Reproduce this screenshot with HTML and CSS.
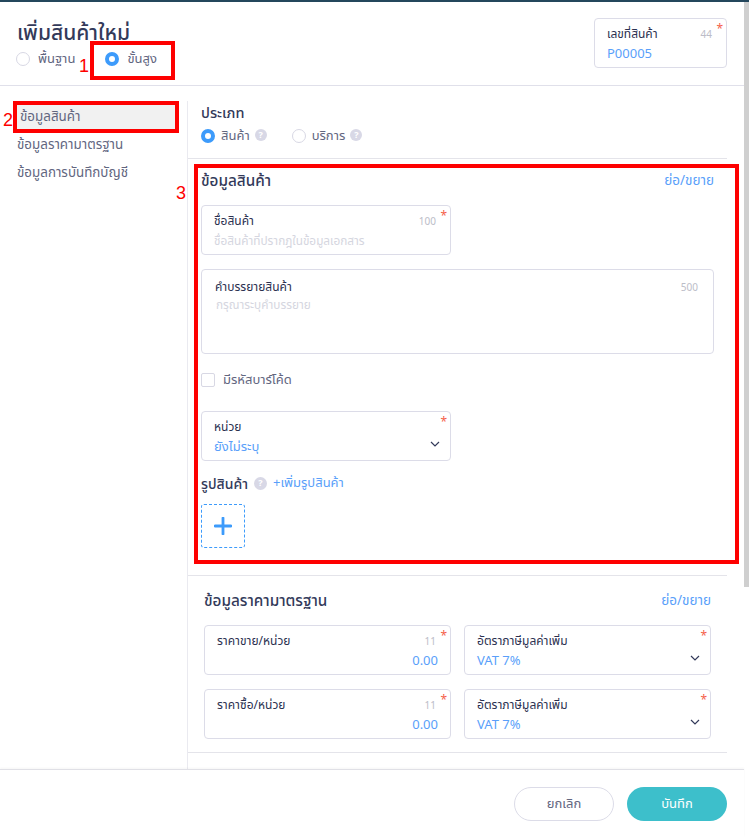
FILE: index.html
```html
<!DOCTYPE html>
<html lang="th">
<head>
    <link rel="stylesheet" href="styles.css">
    <meta charset="UTF-8">
    <title>เพิ่มสินค้าใหม่</title>
</head>
<body>
    <div class="top-bar"></div>
    <div class="window">
        <div class="modal">
            <header class="modal-header">
                <div>
                    <h1>เพิ่มสินค้าใหม่</h1>
                    <div class="mode-row">
                        <span class="radio"></span><span class="radio-text">พื้นฐาน</span>
                        <span class="radio checked mode-second"></span><span class="radio-text">ขั้นสูง</span>
                    </div>
                </div>
                <div class="field code-field">
                    <span class="star">*</span>
                    <div class="field-head"><label>เลขที่สินค้า</label><span class="count">44</span></div>
                    <div class="value code-value">P00005</div>
                </div>
            </header>

            <div class="modal-body">
                <aside class="side-menu">
                    <a class="active">ข้อมูลสินค้า</a>
                    <a>ข้อมูลราคามาตรฐาน</a>
                    <a>ข้อมูลการบันทึกบัญชี</a>
                </aside>

                <main class="content">
                    <section class="type-section">
                        <h3>ประเภท</h3>
                        <div class="type-row">
                            <span class="radio checked"></span><span class="radio-text">สินค้า</span><span class="help">?</span>
                            <span class="radio type-second"></span><span class="radio-text">บริการ</span><span class="help">?</span>
                        </div>
                    </section>

                    <section class="product-section">
                        <div class="section-title"><h2>ข้อมูลสินค้า</h2><a>ย่อ/ขยาย</a></div>
                        <div class="field name-field">
                            <span class="star">*</span>
                            <div class="field-head"><label>ชื่อสินค้า</label><span class="count">100</span></div>
                            <div class="value placeholder">ชื่อสินค้าที่ปรากฎในข้อมูลเอกสาร</div>
                        </div>
                        <div class="field desc-field">
                            <div class="field-head"><label>คำบรรยายสินค้า</label><span class="count">500</span></div>
                            <div class="value placeholder">กรุณาระบุคำบรรยาย</div>
                        </div>
                        <div class="check-row"><span class="checkbox"></span><span class="radio-text">มีรหัสบาร์โค้ด</span></div>
                        <div class="field name-field select-field">
                            <span class="star">*</span>
                            <div class="field-head"><label>หน่วย</label></div>
                            <div class="value">ยังไม่ระบุ</div>
                            <svg class="chevron" width="10" height="6" viewBox="0 0 10 6"><path d="M1 1l4 4 4-4" fill="none" stroke="#333a5a" stroke-width="1.2"/></svg>
                        </div>
                        <div class="picture-row">
                            <h3>รูปสินค้า</h3><span class="help">?</span><a>+เพิ่มรูปสินค้า</a>
                        </div>
                        <div class="add-box">
                            <svg width="18" height="18" viewBox="0 0 18 18"><path d="M9 1v16M1 9h16" stroke="#3d9bfb" stroke-width="2.8" stroke-linecap="round"/></svg>
                        </div>
                    </section>

                    <section class="price-section">
                        <div class="section-title"><h2>ข้อมูลราคามาตรฐาน</h2><a>ย่อ/ขยาย</a></div>
                        <div class="price-grid">
                            <div class="field">
                                <span class="star">*</span>
                                <div class="field-head"><label>ราคาขาย/หน่วย</label><span class="count">11</span></div>
                                <div class="value amount">0.00</div>
                            </div>
                            <div class="field select-field">
                                <span class="star">*</span>
                                <div class="field-head"><label>อัตราภาษีมูลค่าเพิ่ม</label></div>
                                <div class="value">VAT 7%</div>
                                <svg class="chevron" width="10" height="6" viewBox="0 0 10 6"><path d="M1 1l4 4 4-4" fill="none" stroke="#333a5a" stroke-width="1.2"/></svg>
                            </div>
                            <div class="field">
                                <span class="star">*</span>
                                <div class="field-head"><label>ราคาซื้อ/หน่วย</label><span class="count">11</span></div>
                                <div class="value amount">0.00</div>
                            </div>
                            <div class="field select-field">
                                <span class="star">*</span>
                                <div class="field-head"><label>อัตราภาษีมูลค่าเพิ่ม</label></div>
                                <div class="value">VAT 7%</div>
                                <svg class="chevron" width="10" height="6" viewBox="0 0 10 6"><path d="M1 1l4 4 4-4" fill="none" stroke="#333a5a" stroke-width="1.2"/></svg>
                            </div>
                        </div>
                    </section>
                </main>
            </div>

            <footer class="modal-footer">
                <button class="btn-cancel">ยกเลิก</button>
                <button class="btn-save">บันทึก</button>
            </footer>
        </div>
        <div class="scrollbar"><div class="thumb"></div></div>
    </div>

    <div class="mark mark-1"></div><span class="mark-num num-1">1</span>
    <div class="mark mark-2"></div><span class="mark-num num-2">2</span>
    <div class="mark mark-3"></div><span class="mark-num num-3">3</span>
</body>
</html>
```

FILE: styles.css
```css
* {
    box-sizing: border-box;
}

html, body {
    margin: 0;
    padding: 0;
    height: 837px;
    overflow: hidden;
}

body {
    position: relative;
    font-family: "Noto Sans", "Noto Sans Thai", "Noto Sans CJK SC", sans-serif;
    font-size: 13px;
    color: #333a5a;
    background: #fff;
}

h1, h2, h3 {
    margin: 0;
    font-weight: 500;
}

a {
    color: #5a9ffa;
}

.top-bar {
    height: 2px;
    background: #24475c;
}

.window {
    display: flex;
    height: 835px;
}

.modal {
    width: 744px;
    display: flex;
    flex-direction: column;
}

.scrollbar {
    width: 5px;
}

.thumb {
    height: 585px;
    background: #cfcfcf;
}

.modal-header {
    height: 84px;
    padding: 16px 17px 0 17px;
    display: flex;
    justify-content: space-between;
    align-items: flex-start;
    border-bottom: 1px solid #e0e0ea;
}

h1 {
    font-size: 21px;
    line-height: 28px;
}

.mode-row, .type-row, .check-row {
    display: flex;
    align-items: center;
}

.mode-row {
    height: 20px;
    margin: 3px 0 0 -1px;
}

.radio {
    width: 14px;
    height: 14px;
    border: 1px solid #d8d8e4;
    border-radius: 50%;
    flex: none;
}

.radio.checked {
    border: 4px solid #3d9bfb;
}

.radio-text {
    margin-left: 8px;
    color: #62667f;
}

.mode-second {
    margin-left: 30px;
}

.type-row .radio-text {
    margin-left: 6px;
}

.type-second {
    margin-left: 25px;
}

.field {
    position: relative;
    border: 1px solid #dcdce8;
    border-radius: 4px;
    background: #fff;
    padding: 6px 12px 0;
    height: 50px;
}

.field-head {
    display: flex;
    justify-content: space-between;
    align-items: center;
    height: 18px;
}

.field-head label {
    font-size: 12px;
    font-weight: 400;
    color: #2b3050;
}

.count {
    margin-right: 2px;
    font-size: 10px;
    color: #bcbdc8;
}

.star {
    position: absolute;
    top: 1px;
    right: 3px;
    color: #f5604a;
    font-size: 12px;
}

.value {
    color: #5a9ffa;
    line-height: 20px;
}

.placeholder {
    font-size: 11.8px;
    color: #d5d6e0;
}

.amount {
    text-align: right;
}

.code-field {
    width: 133px;
}

.code-value {
    font-size: 13px;
}

.modal-body {
    flex: 1;
    display: flex;
    min-height: 0;
    overflow: hidden;
    padding-top: 15px;
}

.side-menu {
    width: 188px;
    flex: none;
    border-right: 1px solid #eaeaf0;
    padding-right: 9px;
    padding-top: 1px;
}

.side-menu a {
    display: block;
    height: 28px;
    line-height: 28px;
    padding-left: 17px;
    font-size: 13.4px;
    color: #62667f;
}

.side-menu a.active {
    background: #f1f1f1;
    margin-left: 16px;
    padding-left: 4px;
}

.content {
    flex: 1;
    margin-top: -15px;
    padding-right: 17px;
}

.type-section {
    height: 73px;
    padding: 16px 0 0 13px;
    border-bottom: 1px solid #e4e4ea;
}

h3 {
    font-size: 14px;
    line-height: 20px;
}

.type-section h3 {
    font-size: 14.5px;
}

.type-row {
    margin-top: 4px;
    height: 20px;
}

.help {
    width: 12px;
    height: 12px;
    margin-left: 5px;
    margin-bottom: 2px;
    border-radius: 50%;
    background: #d8d8e6;
    color: #fff;
    font-size: 9px;
    line-height: 12px;
    text-align: center;
    font-weight: 700;
    flex: none;
}

.product-section {
    height: 417px;
    padding: 11px 13px 0;
    border-bottom: 1px solid #e4e4ea;
}

.section-title {
    display: flex;
    justify-content: space-between;
    align-items: center;
    height: 22px;
}

.section-title h2 {
    font-size: 15.3px;
}

.section-title a {
    font-size: 13.5px;
}

.name-field {
    width: 250px;
    margin-top: 13px;
}

.desc-field {
    height: 85px;
    margin-top: 14px;
    padding: 8px 15px 0 13px;
}

.desc-field .count {
    margin-right: 0;
}

.desc-field .placeholder {
    margin-top: -2px;
    padding-left: 1px;
}

.check-row {
    margin-top: 16px;
    height: 20px;
}

.checkbox {
    width: 14px;
    height: 14px;
    border: 1px solid #d8d8e4;
    border-radius: 2px;
}

.select-field .chevron {
    position: absolute;
    right: 10px;
    bottom: 13px;
}

.check-row + .select-field {
    margin-top: 21px;
}

.picture-row {
    display: flex;
    align-items: center;
    height: 22px;
    margin-top: 12px;
}

.picture-row .help {
    width: 13px;
    height: 13px;
    margin-left: 6px;
}

.picture-row a {
    margin-left: 6px;
    margin-bottom: 2px;
}

.add-box {
    width: 44px;
    height: 44px;
    margin-top: 9px;
    border: 1px dashed #3d9bfb;
    border-radius: 3px;
    display: flex;
    align-items: center;
    justify-content: center;
}

.price-section {
    height: 177px;
    padding: 14px 16px 0;
    border-bottom: 1px solid #e4e4ea;
}

.price-grid {
    display: grid;
    grid-template-columns: 247px 247px;
    column-gap: 13px;
    row-gap: 14px;
    margin-top: 13px;
}

.modal-footer {
    height: 68px;
    border-top: 1px solid #e0e0e6;
    box-shadow: 0 -1px 2px rgba(0,0,0,0.04);
    display: flex;
    justify-content: flex-end;
    gap: 13px;
    padding: 17px 17px 0 0;
    background: #fff;
}

.modal-footer button {
    width: 100px;
    height: 34px;
    border-radius: 17px;
    font-family: inherit;
    font-size: 13px;
}

.btn-cancel {
    background: #fff;
    border: 1px solid #dcdce8;
    color: #62667f;
}

.btn-save {
    background: #3dbfcb;
    border: none;
    color: #fff;
}

/* red notes drawn over the screenshot */
.mark {
    position: absolute;
    border: 4px solid #fe0000;
}

.mark-1 { left: 90px; top: 41px; width: 85px; height: 39px; }
.mark-2 { left: 13px; top: 101px; width: 166px; height: 32px; }
.mark-3 { left: 194px; top: 164px; width: 545px; height: 400px; }

.mark-num {
    position: absolute;
    font-family: "Liberation Sans", sans-serif;
    font-size: 18px;
    line-height: 20px;
    color: #fe0000;
}

.num-1 { left: 79px; top: 56px; }
.num-2 { left: 3px; top: 110px; }
.num-3 { left: 176px; top: 183px; }
```
